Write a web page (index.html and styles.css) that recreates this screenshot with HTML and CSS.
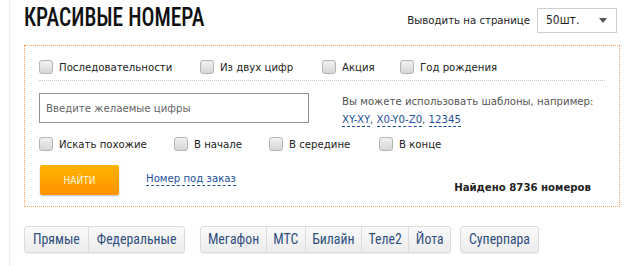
FILE: index.html
```html
<!DOCTYPE html>
<html lang="ru">

<head>
    <meta charset="UTF-8" />
    <meta name="viewport" content="width=device-width, initial-scale=1" />
    <title>Красивые номера</title>
    <link rel="stylesheet" href="styles.css">
</head>

<body>
    <div class="page">
        <div class="head">
            <h1>КРАСИВЫЕ НОМЕРА</h1>
            <div class="per-page">
                <span>Выводить на странице</span>
                <div class="select">50шт. <span class="arrow"></span></div>
            </div>
        </div>

        <!-- Search form -->
        <div class="filter">
            <div class="checks first">
                <label class="check c1"><span class="box"></span>Последовательности</label>
                <label class="check c2"><span class="box"></span>Из двух цифр</label>
                <label class="check c3"><span class="box"></span>Акция</label>
                <label class="check"><span class="box"></span>Год рождения</label>
            </div>

            <div class="search-row">
                <div class="input">Введите желаемые цифры</div>
                <div class="hint">
                    Вы можете использовать шаблоны, например:<br>
                    <a class="dotted">XY-XY</a>, <a class="dotted">X0-Y0-Z0</a>, <a class="dotted">12345</a>
                </div>
            </div>

            <div class="checks">
                <label class="check d1"><span class="box"></span>Искать похожие</label>
                <label class="check d2"><span class="box"></span>В начале</label>
                <label class="check d3"><span class="box"></span>В середине</label>
                <label class="check"><span class="box"></span>В конце</label>
            </div>

            <div class="actions">
                <button class="find">НАЙТИ</button>
                <a class="dotted order">Номер под заказ</a>
                <span class="found">Найдено 8736 номеров</span>
            </div>
        </div>

        <!-- Operator tabs -->
        <div class="tabs">
            <div class="group">
                <span>Прямые</span><span>Федеральные</span>
            </div>
            <div class="group operators">
                <span>Мегафон</span><span>МТС</span><span>Билайн</span><span>Теле2</span><span>Йота</span>
            </div>
            <div class="group super">
                <span>Суперпара</span>
            </div>
        </div>
    </div>
</body>

</html>
```

FILE: styles.css
```css
body {
    margin: 0;
    padding: 0;
    font-family: "DejaVu Sans Condensed", "DejaVu Sans", sans-serif;
    font-stretch: condensed;
    font-size: 11.3px;
    color: #333;
    background-color: #fff;
}

.page {
    margin-left: 9px;
    border-left: 1px solid #ececec;
    padding: 0 20px 14px 14px;
    height: 266px;
    box-sizing: border-box;
}

.head {
    display: flex;
    justify-content: space-between;
    align-items: center;
    height: 40px;
    margin-bottom: 5px;
}

h1 {
    margin: 0;
    font-family: Roboto, sans-serif;
    font-weight: 500;
    font-size: 25px;
    color: #111;
    white-space: nowrap;
    width: 210px;
    transform: scaleX(0.86);
    transform-origin: left center;
    position: relative;
    top: -3px;
}

.per-page {
    display: flex;
    align-items: center;
    gap: 7px;
    margin-right: 3px;
    color: #222;
}

.select {
    width: 70px;
    height: 23px;
    border: 1px solid #cfcfcf;
    padding-left: 8px;
    display: flex;
    align-items: center;
    justify-content: space-between;
    font-size: 12px;
}

.arrow {
    width: 0;
    height: 0;
    border-left: 4px solid transparent;
    border-right: 4px solid transparent;
    border-top: 5px solid #555;
    margin-right: 9px;
}

.filter {
    border: 1px dotted #f3a060;
    padding: 14px 14px 12px 14px;
    height: 162px;
    box-sizing: border-box;
}

.checks {
    display: flex;
    align-items: center;
}

.checks.first {
    padding-bottom: 6px;
    border-bottom: 1px dotted #c8c8c8;
    margin-bottom: 12px;
}

.check {
    display: flex;
    align-items: center;
    color: #222;
}

.box {
    width: 12px;
    height: 12px;
    border: 1px solid #b5b5b5;
    border-radius: 3px;
    background: linear-gradient(#f2f2f2, #d6d6d6);
    margin-right: 6px;
}

.c1 { width: 161px; }
.c2 { width: 122px; }
.c3 { width: 78px; }

.d1 { width: 135px; }
.d2 { width: 95px; }
.d3 { width: 110px; }

.search-row {
    display: flex;
    align-items: flex-start;
    margin-bottom: 8px;
}

.input {
    width: 262px;
    height: 28px;
    border: 1px solid #8f8f8f;
    padding-left: 6px;
    display: flex;
    align-items: center;
    color: #666;
    margin-right: 33px;
}

.hint {
    line-height: 18px;
    color: #555;
    white-space: nowrap;
}

a {
    color: #1d4f9a;
    text-decoration: none;
}

.dotted {
    border-bottom: 1px dashed #1d4f9a;
}

.actions {
    display: flex;
    align-items: center;
    margin-top: 14px;
}

.find {
    width: 79px;
    height: 30px;
    border: none;
    border-radius: 2px;
    background: linear-gradient(#ffb400, #ff9300);
    box-shadow: 0 1px 2px rgba(0, 0, 0, 0.25);
    color: #fff7dc;
    font-family: "DejaVu Sans Condensed", sans-serif;
    font-size: 10px;
    margin-left: 1px;
    margin-right: 27px;
}

.order {
    margin-top: -2px;
}

.found {
    margin-left: auto;
    margin-right: 14px;
    margin-top: 14px;
    font-weight: bold;
    color: #222;
}

.tabs {
    display: flex;
    margin-top: 19px;
    gap: 15px;
}

.group {
    display: flex;
    border: 1px solid #dcdcdc;
    border-radius: 3px;
    background: linear-gradient(#fafafa, #ececec);
    box-shadow: 0 1px 1px rgba(0, 0, 0, 0.08);
}

.group span {
    padding: 0 8px;
    height: 25px;
    line-height: 25px;
    font-family: Roboto, sans-serif;
    font-size: 13.8px;
    color: #2f4f80;
    border-left: 1px solid #dcdcdc;
}

.group.operators span {
    padding: 0 6.5px;
}

.group span:first-child {
    border-left: none;
}

.group.super {
    margin-left: -6px;
}
```
